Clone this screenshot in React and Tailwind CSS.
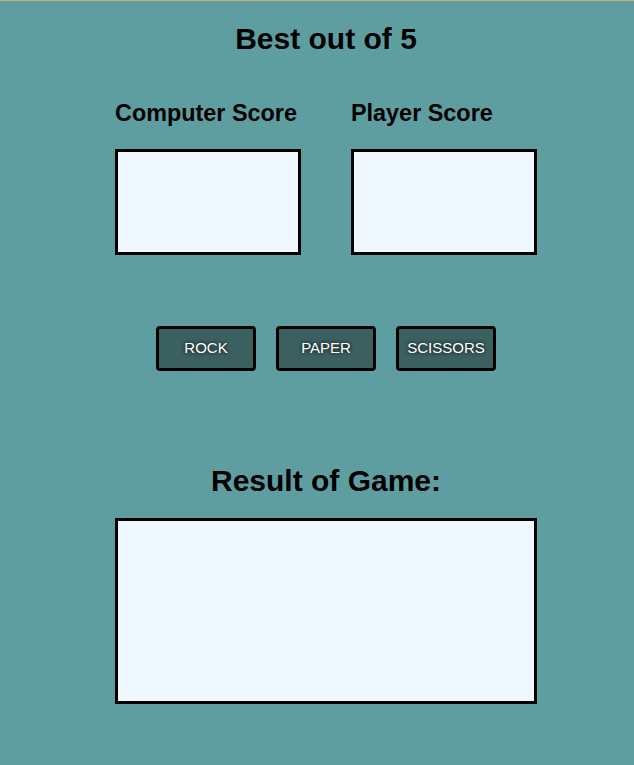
import React from 'react';

const ScoreCard = ({ label }) => (
  <div className="flex flex-col w-[186px]">
    <h2 className="text-[23.4px] leading-[26px] font-bold whitespace-nowrap">{label}</h2>
    <div className="mt-[23px] h-[106px] bg-[#f0f8ff] border-[3px] border-black"></div>
  </div>
);

const MoveButton = ({ children }) => (
  <button className="w-[100px] h-[45px] bg-[#3b6060] border-[3px] border-black rounded-[4px] text-white text-[15px] [text-shadow:0_0_4px_#000]">
    {children}
  </button>
);

export default function App() {
  return (
    <div className="min-h-[765px] bg-[#5f9ea0] text-black font-['Liberation_Sans',Arial,sans-serif] border-t border-[#c9ad85]">
      <div className="pl-[18px] pt-[21px] flex flex-col items-center">
        <h1 className="text-[30px] leading-[34px] font-bold">Best out of 5</h1>

        <div className="mt-[44px] flex gap-[50px]">
          <ScoreCard label="Computer Score" />
          <ScoreCard label="Player Score" />
        </div>

        <div className="mt-[71px] flex gap-[20px]">
          <MoveButton>ROCK</MoveButton>
          <MoveButton>PAPER</MoveButton>
          <MoveButton>SCISSORS</MoveButton>
        </div>

        <h1 className="mt-[93px] text-[30px] leading-[34px] font-bold">Result of Game:</h1>
        <div className="mt-[20px] w-[422px] h-[186px] bg-[#f0f8ff] border-[3px] border-black"></div>
      </div>
    </div>
  );
}
